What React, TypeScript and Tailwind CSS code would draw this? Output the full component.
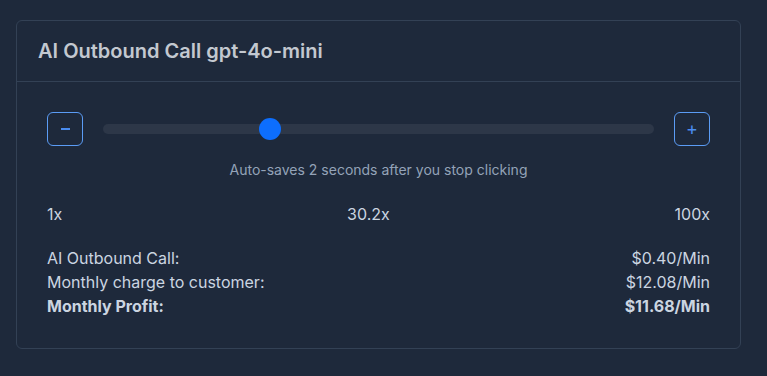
export default function App() {
  const min = 1
  const max = 100
  const value = 30.2
  const pct = (value - min) / (max - min)

  return (
    <div className="min-h-[376px] w-full bg-[#1e293b] pt-5 pl-4" style={{ fontFamily: "Inter, 'Noto Sans', sans-serif" }}>
      <div className="w-[725px] rounded-md border border-[#334155] bg-[#1e293b]">
        {/* HEADER */}
        <div className="flex h-[61px] items-center border-b border-[#334155] px-[21px]">
          <h2 className="text-xl font-semibold text-[#c3c8d0]">AI Outbound Call gpt-4o-mini</h2>
        </div>

        {/* BODY */}
        <div className="px-[30px] pt-[30px] pb-[30px]">
          {/* SLIDER */}
          <div className="flex h-[34px] items-center gap-5">
            <button className="flex h-[34px] w-[36px] items-center justify-center rounded-md border border-[#5b9cf5]">
              <span className="block h-[2px] w-[9px] bg-[#4a8cf0]" />
            </button>
            <div className="relative h-[10px] flex-1 rounded-full bg-[#2d3748]">
              <div
                className="absolute top-1/2 h-[22px] w-[22px] -translate-x-1/2 -translate-y-1/2 rounded-full bg-[#0d6efd]"
                style={{ left: `calc(11px + (100% - 22px) * ${pct})` }}
              />
            </div>
            <button className="flex h-[34px] w-[36px] items-center justify-center rounded-md border border-[#5b9cf5] text-[#4a8cf0]">
              <span className="text-lg leading-none">+</span>
            </button>
          </div>

          <p className="mt-[14px] text-center text-sm text-[#94a3b8]">
            Auto-saves 2 seconds after you stop clicking
          </p>

          {/* SCALE */}
          <div className="mt-[22px] flex items-center justify-between text-base leading-6 text-[#cbd5e1]">
            <span>1x</span>
            <span>30.2x</span>
            <span>100x</span>
          </div>

          {/* SUMMARY */}
          <div className="mt-5 text-base leading-6 text-[#cbd5e1]">
            <div className="flex justify-between">
              <span>AI Outbound Call:</span>
              <span>$0.40/Min</span>
            </div>
            <div className="flex justify-between">
              <span>Monthly charge to customer:</span>
              <span>$12.08/Min</span>
            </div>
            <div className="flex justify-between font-bold">
              <span>Monthly Profit:</span>
              <span>$11.68/Min</span>
            </div>
          </div>
        </div>
      </div>
    </div>
  )
}
